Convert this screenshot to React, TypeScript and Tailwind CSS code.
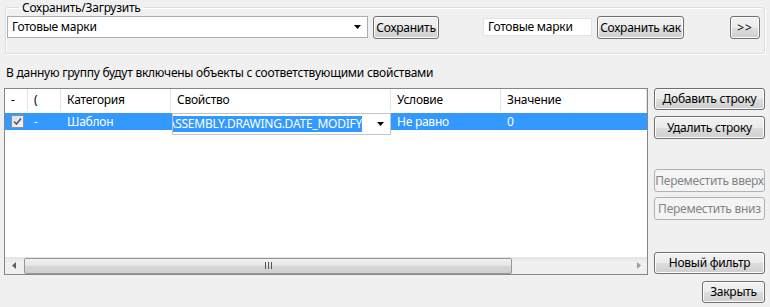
import React from 'react';

const font = { fontFamily: '"Noto Sans", "Segoe UI", sans-serif' };

const btn =
  'flex items-center justify-center whitespace-nowrap rounded-[3px] border border-[#707070] bg-[linear-gradient(to_bottom,#f2f2f2_0%,#ebebeb_50%,#dddddd_51%,#cfcfcf_100%)] text-[12px] text-black shadow-[inset_0_0_0_1px_#fcfcfc]';
const btnOff =
  'flex items-center justify-center whitespace-nowrap rounded-[3px] border border-[#adb2b5] bg-[#f4f4f4] text-[12px] text-[#838383]';

const Arrow = () => (
  <svg width="7" height="4" viewBox="0 0 7 4">
    <path d="M0 0h7L3.5 4z" fill="#000" />
  </svg>
);

const columns = [
  { name: '-', w: 23 },
  { name: '(', w: 33 },
  { name: 'Категория', w: 110 },
  { name: 'Свойство', w: 220 },
  { name: 'Условие', w: 110 },
  { name: 'Значение', w: 146 },
];

export default function App() {
  return (
    <div
      className="w-[770px] h-[307px] bg-[#f0f0f0] text-[12px] tracking-[-0.25px] text-black overflow-hidden pt-[1px]"
      style={font}
    >
      {/* Save/Load group */}
      <fieldset className="mx-[5px] h-[53px] rounded-[3px] border border-[#d5dfe5] shadow-[inset_1px_1px_0_#ffffff,1px_1px_0_#ffffff] px-[1px]">
        <legend className="ml-[12px] px-[3px] leading-[13px]">Сохранить/Загрузить</legend>
        <div className="flex items-start mt-[2px]">
          <div className="w-[361px] h-[22px] bg-white border border-[#abadb3] flex items-center pl-[4px] pr-[6px]">
            <span className="flex-1">Готовые марки</span>
            <Arrow />
          </div>
          <div className={`${btn} ml-[5px] w-[66px] h-[23px]`}>Сохранить</div>
          <div className="ml-[44px] mt-[2px] w-[109px] h-[18px] bg-white border border-[#e3e3e3] flex items-center pl-[4px]">
            Готовые марки
          </div>
          <div className={`${btn} ml-[5px] w-[87px] h-[23px]`}>Сохранить как</div>
          <div className={`${btn} ml-[46px] w-[30px] h-[23px] text-[10px] tracking-[1px]`}>&gt;&gt;</div>
        </div>
      </fieldset>

      <div className="ml-[6px] mt-[11px] leading-[15px]">
        В данную группу будут включены объекты с соответствующими свойствами
      </div>

      <div className="flex mt-[8px] ml-[4px]">
        {/* Table */}
        <div className="relative w-[644px] h-[187px] bg-white border border-[#828790] flex flex-col">
          <div className="flex h-[22px] bg-white">
            {columns.map((c) => (
              <div
                key={c.name}
                className="h-full border-r border-[#e5e5e5] pl-[6px] flex items-center shrink-0"
                style={{ width: c.w }}
              >
                {c.name}
              </div>
            ))}
          </div>
          <div className="mt-[2px] h-[17px] bg-[#3399ff] text-white flex items-center">
            <div className="w-[23px] flex justify-center pl-[2px]">
              <div className="w-[13px] h-[13px] border border-[#8e8f8f] bg-[linear-gradient(135deg,#dcdcdc,#f7f7f7)] flex items-center justify-center">
                <svg width="9" height="9" viewBox="0 0 9 9">
                  <path d="M1 4.5l2.5 2.5L8 1.5" fill="none" stroke="#4d5a7a" strokeWidth="1.6" />
                </svg>
              </div>
            </div>
            <div className="w-[33px] pl-[6px]">-</div>
            <div className="w-[110px] pl-[6px]">Шаблон</div>
            <div className="w-[220px]" />
            <div className="w-[110px] pl-[6px]">Не равно</div>
            <div className="pl-[6px]">0</div>
          </div>

          {/* inline editor */}
          <div className="absolute left-[167px] top-[24px] w-[219px] h-[22px] bg-white border border-[#c5c5c5] flex items-center pr-[6px] overflow-hidden">
            <div className="flex-1 overflow-hidden flex justify-end pr-[15px]">
              <span className="bg-[#3399ff] text-white whitespace-nowrap leading-[16px]">
                ASSEMBLY.DRAWING.DATE_MODIFY
              </span>
              <span className="w-px h-[16px] bg-black" />
            </div>
            <Arrow />
          </div>

          <div className="flex-1" />

          {/* Horizontal scrollbar */}
          <div className="h-[17px] flex items-center bg-[linear-gradient(to_bottom,#e3e3e3,#f0f0f0_30%,#f0f0f0)]">
            <div className="w-[17px] h-full flex items-center justify-center">
              <svg width="4" height="7" viewBox="0 0 4 7">
                <path d="M4 0v7L0 3.5z" fill="#606060" />
              </svg>
            </div>
            <div className="ml-[2px] w-[488px] h-[16px] rounded-[2px] border border-[#979797] bg-[linear-gradient(to_bottom,#f2f2f2,#e4e4e4_50%,#d6d6d6_51%,#cfcfcf)] flex items-center justify-center">
              <div className="flex gap-[2px]">
                <span className="w-px h-[7px] bg-[#555]" />
                <span className="w-px h-[7px] bg-[#555]" />
                <span className="w-px h-[7px] bg-[#555]" />
              </div>
            </div>
            <div className="flex-1" />
            <div className="w-[17px] h-full flex items-center justify-center">
              <svg width="4" height="7" viewBox="0 0 4 7">
                <path d="M0 0v7L4 3.5z" fill="#a0a0a0" />
              </svg>
            </div>
          </div>
        </div>

        {/* Right buttons */}
        <div className="ml-[6px] flex flex-col w-[111px]">
          <div className={`${btn} h-[22px]`}>Добавить строку</div>
          <div className={`${btn} h-[23px] mt-[6px]`}>Удалить строку</div>
          <div className={`${btnOff} h-[23px] mt-[30px]`}>Переместить вверх</div>
          <div className={`${btnOff} h-[23px] mt-[5px]`}>Переместить вниз</div>
          <div className={`${btn} h-[22px] mt-[32px]`}>Новый фильтр</div>
        </div>
      </div>

      <div className="flex justify-end pr-[5px] mt-[6px]">
        <div className={`${btn} w-[63px] h-[22px]`}>Закрыть</div>
      </div>
    </div>
  );
}
